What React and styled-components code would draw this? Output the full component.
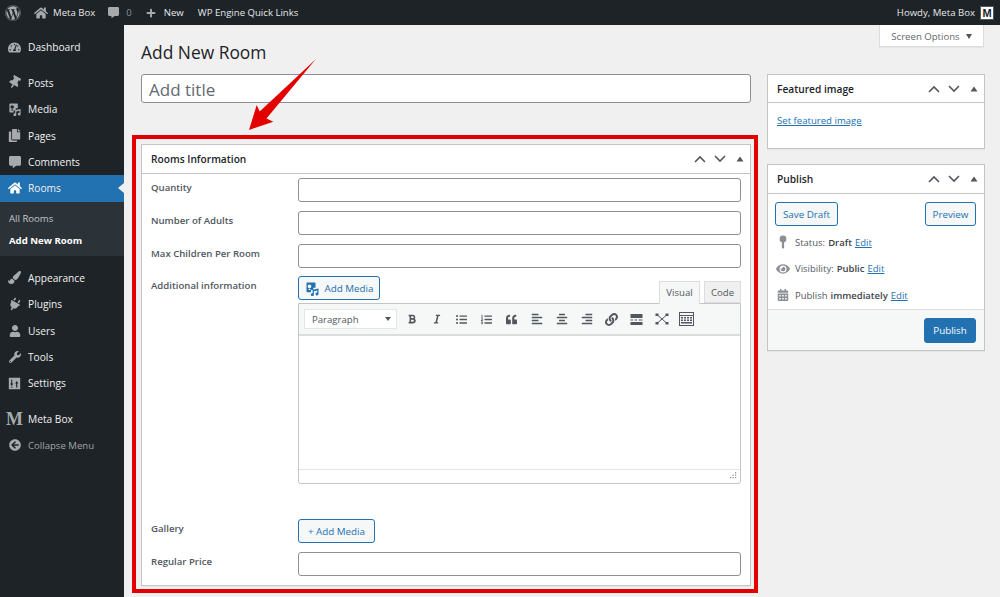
import React from "react";
import styled, { createGlobalStyle } from "styled-components";
import {
  FaWordpress, FaHome, FaTachometerAlt, FaThumbtack, FaCopy, FaCommentAlt, FaPaintBrush, FaPlug,
  FaUser, FaWrench, FaArrowCircleLeft, FaPlus, FaBold, FaItalic, FaListUl, FaListOl, FaQuoteLeft,
  FaAlignLeft, FaAlignCenter, FaAlignRight, FaLink, FaEye, FaCalendarAlt,
} from "react-icons/fa";

const Global = createGlobalStyle`
  html, body { margin: 0; padding: 0; height: 597px; overflow: hidden; background: #f0f0f1; }
  * { box-sizing: border-box; }
  body { font-family: "Open Sans", "Liberation Sans", sans-serif; font-size: 10px; color: #3c434a; }
`;

const Shell = styled.div`
  display: flex;
  flex-direction: column;
  width: 1000px;
  height: 597px;
  position: relative;
`;

const AdminBar = styled.header`
  display: flex;
  align-items: center;
  height: 25px;
  flex: none;
  background: #1d2327;
  color: #e6e8e9;
  font-size: 9.6px;
  padding: 0 6px 0 5px;
`;

const BarItem = styled.div`
  display: flex;
  align-items: center;
  gap: ${(p) => p.$gap ?? 5}px;
  margin-left: ${(p) => p.$ml || 0}px;
  color: ${(p) => (p.$dim ? "#8c8f94" : "inherit")};
  svg { color: #a7aaad; flex: none; }
`;

const BarSpacer = styled.div`
  flex: 1;
`;

const Avatar = styled.div`
  width: 14px;
  height: 14px;
  background: #fff;
  border: 1px solid #50575e;
  color: #1d2327;
  font-family: "Liberation Sans", sans-serif;
  font-weight: 700;
  font-size: 11px;
  line-height: 12px;
  text-align: center;
  margin-left: 5px;
`;

const Main = styled.div`
  display: flex;
  flex: 1;
  min-height: 0;
`;

const Sidebar = styled.nav`
  width: 124px;
  flex: none;
  background: #1d2327;
  padding-top: 9.3px;
  color: #f0f0f1;
`;

const MenuItem = styled.div`
  display: flex;
  align-items: center;
  height: 26.4px;
  position: relative;
  margin-top: ${(p) => (p.$sep ? 9 : 0)}px;
  background: ${(p) => (p.$active ? "#2271b1" : "transparent")};
  color: ${(p) => (p.$muted ? "#a0a5aa" : "#f0f0f1")};
  font-size: ${(p) => (p.$muted ? 9.6 : 10.2)}px;

  ${(p) => p.$active && `
    &::after {
      content: "";
      position: absolute;
      right: 0;
      top: 8px;
      border: 5px solid transparent;
      border-right: 6px solid #f0f0f1;
      border-left: 0;
    }
  `}
`;

const MenuIcon = styled.span`
  width: 28px;
  flex: none;
  display: flex;
  justify-content: center;
  padding-left: 1px;
  color: ${(p) => (p.$active ? "#fff" : "#a7aaad")};
`;

const MetaLogo = styled.span`
  font-family: "Liberation Serif", serif;
  font-weight: 700;
  font-size: 18px;
  line-height: 18px;
  color: #a7aaad;
`;

const SubMenu = styled.div`
  background: #2c3338;
  height: 54px;
  padding-top: 6px;
`;

const SubItem = styled.div`
  height: 22px;
  line-height: 22px;
  padding-left: 9px;
  font-size: 9.6px;
  font-weight: ${(p) => (p.$current ? 700 : 400)};
  color: ${(p) => (p.$current ? "#fff" : "#c3c4c7")};
`;

const Content = styled.main`
  flex: 1;
  min-width: 0;
  padding: 0 15px 0 8px;
  position: relative;
`;

const ScreenOptions = styled.div`
  position: absolute;
  top: 0;
  right: 16px;
  width: 105px;
  height: 22px;
  padding-top: 1px;
  background: #fff;
  border: 1px solid #dcdcde;
  border-top: 0;
  box-shadow: 0 1px 1px rgba(0, 0, 0, 0.04);
  display: flex;
  align-items: center;
  justify-content: center;
  gap: 6px;
  font-size: 9.6px;
  color: #646970;
  &::after {
    content: "";
    border: 3.5px solid transparent;
    border-top: 5px solid #50575e;
    border-bottom: 0;
  }
`;

const Columns = styled.div`
  display: flex;
  gap: 7px;
`;

const Primary = styled.div`
  width: 628px;
  flex: none;
`;

const Title = styled.h1`
  margin: 0;
  height: 49px;
  padding: 14px 0 0 9px;
  font-size: 17.4px;
  line-height: 26px;
  font-weight: 400;
  color: #1d2327;
`;

const TitleInput = styled.div`
  margin-left: 9px;
  width: 610px;
  height: 29px;
  background: #fff;
  border: 1px solid #8c8f94;
  border-radius: 3px;
  padding-left: 7px;
  font-size: 17px;
  line-height: 29px;
  color: #646970;
`;

const Frame = styled.div`
  margin-top: 32px;
  width: 626px;
  height: 458px;
  border: 4px solid #e30000;
  padding: 5px 3px 3px 5px;
`;

const Box = styled.section`
  background: #fff;
  border: 1px solid #c3c4c7;
  box-shadow: 0 1px 1px rgba(0, 0, 0, 0.04);
  margin-bottom: ${(p) => p.$mb || 0}px;
`;

const BoxHead = styled.div`
  display: flex;
  align-items: center;
  justify-content: space-between;
  height: ${(p) => p.$h || 28}px;
  padding: 0 6px 0 9px;
  border-bottom: 1px solid #c3c4c7;
  font-size: 10.2px;
  font-weight: 600;
  color: #1d2327;
`;

const Handles = styled.div`
  display: flex;
  align-items: center;
  gap: 8px;
  color: #50575e;
`;

const FormBody = styled.div`
  padding: 4px 9px 9px;
  display: flex;
  flex-direction: column;
  gap: 9px;
`;

const Field = styled.div`
  display: grid;
  grid-template-columns: 147px 443px;
  margin-top: ${(p) => p.$mt || 0}px;
`;

const Label = styled.div`
  font-size: 9.6px;
  font-weight: 600;
  color: #50575e;
  padding-top: 3px;
  line-height: 14px;
`;

const Input = styled.div`
  height: 24px;
  background: #fff;
  border: 1px solid #8c8f94;
  border-radius: 3px;
`;

const Btn = styled.div`
  display: inline-flex;
  align-items: center;
  justify-content: center;
  gap: 5px;
  width: ${(p) => p.$w}px;
  height: ${(p) => p.$h || 24}px;
  background: ${(p) => (p.$primary ? "#2271b1" : "#f6f7f7")};
  border: 1px solid #2271b1;
  border-radius: 3px;
  font-size: 9.8px;
  color: ${(p) => (p.$primary ? "#fff" : "#2271b1")};
`;

const EditorTop = styled.div`
  display: flex;
  justify-content: space-between;
  align-items: flex-start;
  height: 27px;
  position: relative;
`;

const Tabs = styled.div`
  display: flex;
  gap: 4px;
  margin-top: 5px;
  position: relative;
  z-index: 1;
`;

const Tab = styled.div`
  width: ${(p) => p.$w}px;
  height: ${(p) => (p.$on ? 23 : 22)}px;
  line-height: 21px;
  text-align: center;
  font-size: 9.6px;
  color: #50575e;
  background: ${(p) => (p.$on ? "#f6f7f7" : "#f0f0f1")};
  border: 1px solid #dcdcde;
  border-bottom: ${(p) => (p.$on ? "0" : "1px solid #dcdcde")};
`;

const Editor = styled.div`
  height: 181px;
  border: 1px solid #c3c4c7;
  border-radius: 0 0 3px 3px;
  background: #fff;
  display: flex;
  flex-direction: column;
`;

const Toolbar = styled.div`
  height: 32px;
  flex: none;
  display: flex;
  align-items: center;
  padding-left: 5px;
  background: #f6f7f7;
  border-bottom: 2px solid #dcdcde;
`;

const FormatSelect = styled.div`
  width: 93px;
  height: 20px;
  background: #fff;
  border: 1px solid #e4e5e7;
  display: flex;
  align-items: center;
  justify-content: space-between;
  padding: 0 5px 0 7px;
  font-size: 9.6px;
  color: #50575e;
  margin-right: 2px;
  &::after {
    content: "";
    border: 3px solid transparent;
    border-top: 4px solid #50575e;
    border-bottom: 0;
  }
`;

const ToolIcon = styled.span`
  width: 25px;
  flex: none;
  display: flex;
  justify-content: center;
  color: #50575e;
`;

const EditArea = styled.div`
  flex: 1;
`;

const StatusBar = styled.div`
  height: 14px;
  flex: none;
  border-top: 1px solid #e4e5e7;
  display: flex;
  justify-content: flex-end;
  align-items: flex-end;
  padding: 0 3px 3px 0;
  color: #8c8f94;
`;

const Aside = styled.aside`
  width: 218px;
  flex: none;
  padding-top: 49px;
`;

const SetLink = styled.a`
  display: block;
  height: 45px;
  padding: 11px 0 0 9px;
  font-size: 9.6px;
  color: #2271b1;
  text-decoration: underline;
`;

const PublishActions = styled.div`
  display: flex;
  justify-content: space-between;
  padding: 8px 8px 0 7px;
`;

const MetaList = styled.div`
  display: flex;
  flex-direction: column;
  padding: 3px 0 0.5px;
`;

const MetaRow = styled.div`
  display: flex;
  align-items: center;
  height: 26.6px;
  font-size: 9.5px;
  color: #50575e;
  b { font-weight: 600; color: #3c434a; margin: 0 3px; }
  a { color: #2271b1; text-decoration: underline; }
`;

const MetaIcon = styled.span`
  width: 27px;
  flex: none;
  display: flex;
  justify-content: center;
  padding-left: 2px;
  color: #8c8f94;
`;

const PublishFoot = styled.div`
  height: 41px;
  background: #f6f7f7;
  border-top: 1px solid #dcdcde;
  display: flex;
  justify-content: flex-end;
  align-items: center;
  padding-right: 8px;
`;

const ArrowMark = styled.svg`
  position: absolute;
  left: 125px;
  top: 50px;
  pointer-events: none;
`;

const MediaIcon = ({ size = 14 }) => (
  <svg width={size} height={size} viewBox="0 0 20 20" fill="currentColor">
    <path fillRule="evenodd" d="M2 2h11a1 1 0 0 1 1 1v6h-3v3H8v3H3a1 1 0 0 1-1-1V3a1 1 0 0 1 1-1zm4 2.5a2.5 2.5 0 1 0 0 5 2.5 2.5 0 0 0 0-5zM4 12l2-2 2 2H4z" />
    <path d="M18 10v7.2a2 2 0 1 1-1.6-1.9V12.6l-4.6 1.1v4.5a2 2 0 1 1-1.6-1.9V11.6z" />
  </svg>
);

const SettingsIcon = () => (
  <svg width="13" height="13" viewBox="0 0 16 16" fill="currentColor">
    <path fillRule="evenodd" d="M1 1h14v14H1zm3 2v5H2.6L4.6 11l2-3H5.2V3zm6 10V8H8.8l2-3 2 3h-1.4v5zM3.6 12v1h2v-1z" />
  </svg>
);

const PinIcon = () => (
  <svg width="12" height="14" viewBox="0 0 12 14" fill="currentColor">
    <circle cx="6" cy="4" r="3.4" />
    <rect x="4.9" y="6" width="2.2" height="7.5" rx="1" />
  </svg>
);

const Up = () => (
  <svg width="12" height="8" viewBox="0 0 12 8" fill="none" stroke="currentColor" strokeWidth="1.6">
    <path d="M1 7l5-5 5 5" />
  </svg>
);

const Down = () => (
  <svg width="12" height="8" viewBox="0 0 12 8" fill="none" stroke="currentColor" strokeWidth="1.6">
    <path d="M1 1l5 5 5-5" />
  </svg>
);

const Tri = () => (
  <svg width="8" height="6" viewBox="0 0 8 6" fill="currentColor" style={{ marginLeft: 2 }}>
    <path d="M4 0.5l3.5 5h-7z" />
  </svg>
);

const MoreIcon = () => (
  <svg width="13" height="13" viewBox="0 0 13 13" fill="currentColor">
    <rect x="0.5" y="1" width="12" height="4" />
    <rect x="0.5" y="9" width="12" height="3" />
    <path d="M0.5 6.5h2.5v1H0.5zM4.5 6.5h2.5v1H4.5zM8.5 6.5h4v1h-4z" />
  </svg>
);

const FullIcon = () => (
  <svg width="14" height="12" viewBox="0 0 14 12" fill="currentColor" stroke="currentColor">
    <path d="M3 2.5l8 7M11 2.5l-8 7" strokeWidth="1" />
    <path d="M0.5 0.5h3v2.5h-3zM10.5 0.5h3v2.5h-3zM0.5 9h3v2.5h-3zM10.5 9h3v2.5h-3z" strokeWidth="0" />
  </svg>
);

const SinkIcon = () => (
  <svg width="15" height="14" viewBox="0 0 15 14" fill="currentColor">
    <path fillRule="evenodd" d="M0 0h15v14H0zm1 1v2h13V1zm0 3v9h13V4z" />
    <path d="M2 5h2v1.5H2zM5 5h2v1.5H5zM8 5h2v1.5H8zM11 5h2v1.5h-2zM2 7.5h2V9H2zM5 7.5h2V9H5zM8 7.5h2V9H8zM11 7.5h2V9h-2zM2 10h11v1.5H2z" />
  </svg>
);

const Grip = () => (
  <svg width="8" height="8" viewBox="0 0 8 8" fill="currentColor">
    <path d="M6 0h1.2v1.2H6zM3.5 2.5h1.2v1.2H3.5zM6 2.5h1.2v1.2H6zM1 5h1.2v1.2H1zM3.5 5h1.2v1.2H3.5zM6 5h1.2v1.2H6z" />
  </svg>
);

const HandleSet = () => (
  <Handles>
    <Up />
    <Down />
    <Tri />
  </Handles>
);

const menuTop = [
  { label: "Posts", icon: <FaThumbtack size={13} style={{ transform: "rotate(30deg)" }} />, sep: true },
  { label: "Media", icon: <MediaIcon /> },
  { label: "Pages", icon: <FaCopy size={13} /> },
  { label: "Comments", icon: <FaCommentAlt size={12} /> },
];

const menuBottom = [
  { label: "Appearance", icon: <FaPaintBrush size={13} />, sep: true },
  { label: "Plugins", icon: <FaPlug size={13} style={{ transform: "rotate(30deg)" }} /> },
  { label: "Users", icon: <FaUser size={12} /> },
  { label: "Tools", icon: <FaWrench size={12} /> },
  { label: "Settings", icon: <SettingsIcon /> },
];

const tools = [
  <FaBold size={10} />, <FaItalic size={10} />, <FaListUl size={11} />, <FaListOl size={11} />,
  <FaQuoteLeft size={11} />, <FaAlignLeft size={12} />, <FaAlignCenter size={12} />, <FaAlignRight size={12} />,
  <FaLink size={13} />, <MoreIcon />, <FullIcon />, <SinkIcon />,
];

export default function App() {
  return (
    <Shell>
      <Global />
      <AdminBar>
        <BarItem><FaWordpress size={16} /></BarItem>
        <BarItem $ml={13}><FaHome size={14} />Meta Box</BarItem>
        <BarItem $ml={13} $gap={7} $dim><FaCommentAlt size={11} />0</BarItem>
        <BarItem $ml={14} $gap={8}><FaPlus size={10} />New</BarItem>
        <BarItem $ml={14}>WP Engine Quick Links</BarItem>
        <BarSpacer />
        <BarItem $gap={0}>Howdy, Meta Box<Avatar>M</Avatar></BarItem>
      </AdminBar>
      <Main>
        <Sidebar>
          <MenuItem>
            <MenuIcon><FaTachometerAlt size={13} /></MenuIcon>Dashboard
          </MenuItem>
          {menuTop.map((m) => (
            <MenuItem key={m.label} $sep={m.sep}>
              <MenuIcon>{m.icon}</MenuIcon>{m.label}
            </MenuItem>
          ))}
          <MenuItem $active>
            <MenuIcon $active><FaHome size={14} /></MenuIcon>Rooms
          </MenuItem>
          <SubMenu>
            <SubItem>All Rooms</SubItem>
            <SubItem $current>Add New Room</SubItem>
          </SubMenu>
          {menuBottom.map((m) => (
            <MenuItem key={m.label} $sep={m.sep}>
              <MenuIcon>{m.icon}</MenuIcon>{m.label}
            </MenuItem>
          ))}
          <MenuItem $sep>
            <MenuIcon><MetaLogo>M</MetaLogo></MenuIcon>Meta Box
          </MenuItem>
          <MenuItem $muted>
            <MenuIcon><FaArrowCircleLeft size={12} /></MenuIcon>Collapse Menu
          </MenuItem>
        </Sidebar>
        <Content>
          <ScreenOptions>Screen Options</ScreenOptions>
          <Columns>
            <Primary>
              <Title>Add New Room</Title>
              <TitleInput>Add title</TitleInput>
              <Frame>
                <Box>
                  <BoxHead $h={29}>Rooms Information<HandleSet /></BoxHead>
                  <FormBody>
                    <Field><Label>Quantity</Label><Input /></Field>
                    <Field><Label>Number of Adults</Label><Input /></Field>
                    <Field><Label>Max Children Per Room</Label><Input /></Field>
                    <Field $mt={-1}>
                      <Label>Additional information</Label>
                      <div>
                        <EditorTop>
                          <Btn $w={82}><MediaIcon size={15} />Add Media</Btn>
                          <Tabs>
                            <Tab $w={41} $on>Visual</Tab>
                            <Tab $w={37}>Code</Tab>
                          </Tabs>
                        </EditorTop>
                        <Editor>
                          <Toolbar>
                            <FormatSelect>Paragraph</FormatSelect>
                            {tools.map((icon, i) => <ToolIcon key={i}>{icon}</ToolIcon>)}
                          </Toolbar>
                          <EditArea />
                          <StatusBar><Grip /></StatusBar>
                        </Editor>
                      </div>
                    </Field>
                    <Field $mt={26}>
                      <Label>Gallery</Label>
                      <div><Btn $w={77}>+ Add Media</Btn></div>
                    </Field>
                    <Field><Label>Regular Price</Label><Input /></Field>
                  </FormBody>
                </Box>
              </Frame>
            </Primary>
            <Aside>
              <Box $mb={15}>
                <BoxHead>Featured image<HandleSet /></BoxHead>
                <SetLink>Set featured image</SetLink>
              </Box>
              <Box>
                <BoxHead $h={29}>Publish<HandleSet /></BoxHead>
                <PublishActions>
                  <Btn $w={63}>Save Draft</Btn>
                  <Btn $w={51}>Preview</Btn>
                </PublishActions>
                <MetaList>
                  <MetaRow><MetaIcon><PinIcon /></MetaIcon>Status:<b>Draft</b><a>Edit</a></MetaRow>
                  <MetaRow><MetaIcon><FaEye size={14} /></MetaIcon>Visibility:<b>Public</b><a>Edit</a></MetaRow>
                  <MetaRow><MetaIcon><FaCalendarAlt size={12} /></MetaIcon>Publish<b>immediately</b><a>Edit</a></MetaRow>
                </MetaList>
                <PublishFoot>
                  <Btn $w={52} $h={25} $primary>Publish</Btn>
                </PublishFoot>
              </Box>
            </Aside>
          </Columns>
        </Content>
      </Main>
      <ArrowMark width="200" height="90" viewBox="125 50 200 90">
        <path d="M315.7 59.3L259.7 111.5L256.7 105L249 130L273.3 121.7L266.5 118.5Z" fill="#e30000" />
      </ArrowMark>
    </Shell>
  );
}
